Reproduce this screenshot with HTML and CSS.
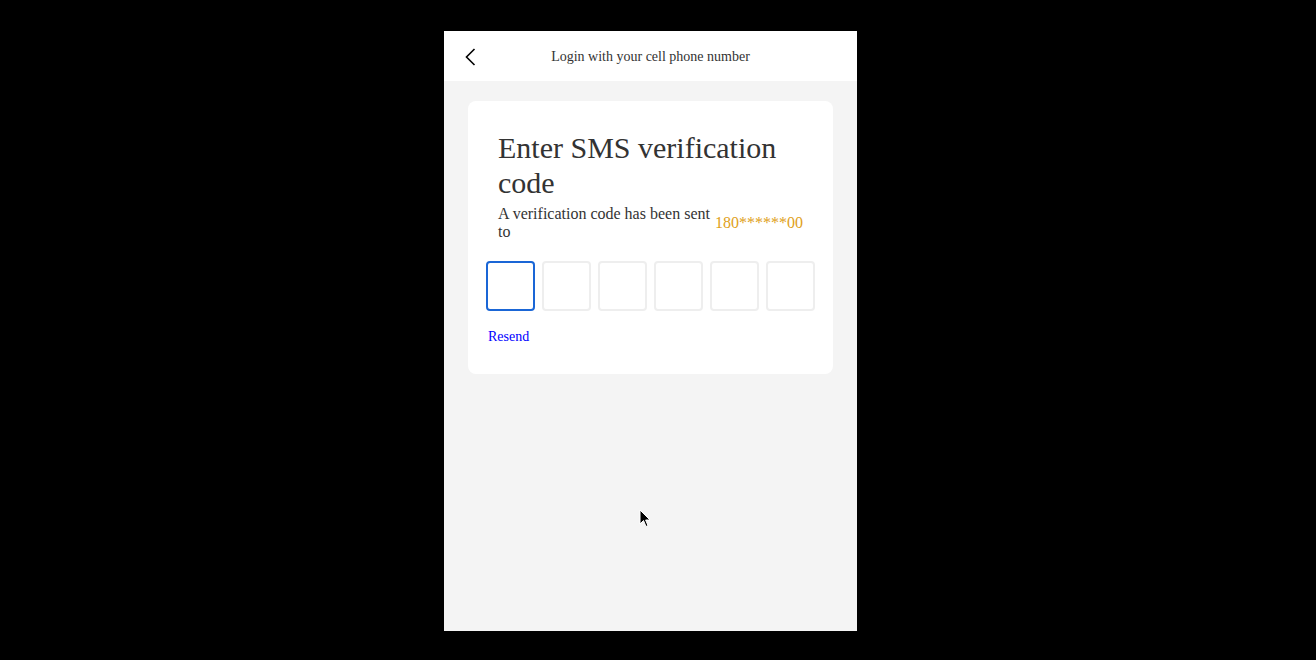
FILE: index.html
```html
<!DOCTYPE html>
<html>
<head>
<meta charset="utf-8">
<link rel="stylesheet" href="styles.css">
</head>
<body>
<div class="stage">
  <div class="phone">
    <header class="topbar">
      <span class="back">
        <svg width="14" height="20" viewBox="0 0 14 20"><path d="M10.5 2 L2.5 10 L10.5 18" fill="none" stroke="#000" stroke-width="1.6"/></svg>
      </span>
      <span class="topbar-title">Login with your cell phone number</span>
    </header>
    <main class="content">
      <section class="card">
        <h1 class="title">Enter SMS verification code</h1>
        <div class="sent">
          <span class="sent-text">A verification code has been sent to</span>
          <span class="sent-phone">180******00</span>
        </div>
        <div class="codes">
          <div class="code active"></div>
          <div class="code"></div>
          <div class="code"></div>
          <div class="code"></div>
          <div class="code"></div>
          <div class="code"></div>
        </div>
        <a class="resend">Resend</a>
      </section>
    </main>
  </div>
  <svg class="cursor" width="14" height="20" viewBox="0 0 14 20"><path d="M1 1 L1 15 L4.5 11.5 L7 17.5 L9 16.6 L6.6 11 L11 11 Z" fill="#000" stroke="#fff" stroke-width="1"/></svg>
</div>
</body>
</html>
```

FILE: styles.css
```css
html, body {
  margin: 0;
  padding: 0;
  background: #000;
}
body {
  font-family: "Liberation Serif", "Times New Roman", serif;
}
.stage {
  width: 1316px;
  height: 660px;
  padding: 31px 0 0 444px;
  box-sizing: border-box;
  position: relative;
}
.phone {
  width: 413px;
  height: 600px;
  background: #f4f4f4;
  display: flex;
  flex-direction: column;
}
.topbar {
  height: 50px;
  padding-top: 1px;
  box-sizing: border-box;
  background: #fff;
  display: flex;
  align-items: center;
  position: relative;
}
.back {
  position: absolute;
  left: 20px;
  top: 16px;
  width: 14px;
  height: 20px;
  display: flex;
}
.topbar-title {
  flex: 1;
  text-align: center;
  font-size: 14px;
  color: #333;
}
.content {
  padding: 20px 24px;
}
.card {
  background: #fff;
  border-radius: 8px;
  padding: 29px 18px 29px;
}
.title {
  margin: 0 12px;
  font-weight: normal;
  font-size: 30px;
  line-height: 35px;
  color: #333;
}
.sent {
  display: flex;
  align-items: center;
  gap: 5px;
  margin: 5px 12px 0 12px;
}
.sent-text {
  font-size: 16px;
  line-height: 18px;
  color: #333;
}
.sent-phone {
  font-size: 16px;
  color: #e0a11a;
  white-space: nowrap;
}
.codes {
  display: flex;
  gap: 7px;
  margin-top: 20px;
}
.code {
  width: 49px;
  height: 50px;
  box-sizing: border-box;
  border: 2px solid #eeeeee;
  border-radius: 4px;
}
.code.active {
  border-color: #1a66d6;
}
.resend {
  display: block;
  margin: 18px 0 0 2px;
  font-size: 14px;
  line-height: 16px;
  color: #0000ff;
}
.cursor {
  position: absolute;
  left: 639px;
  top: 509px;
}
```
